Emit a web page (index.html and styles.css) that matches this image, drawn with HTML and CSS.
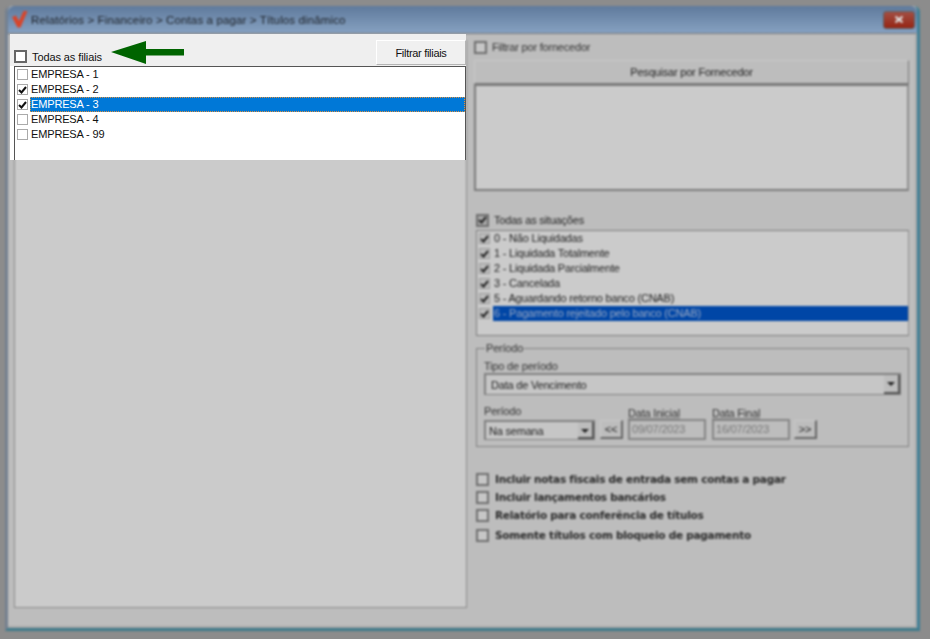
FILE: index.html
```html
<!DOCTYPE html>
<html lang="pt-BR">
<head>
  <meta charset="UTF-8">
  <title>Títulos dinâmico</title>
  <link rel="stylesheet" href="styles.css">
</head>
<body>
  <div class="stage">
    <div class="window">
      <div class="titlebar">
        <svg class="logo" width="16" height="17" viewBox="0 0 16 17"><path d="M0 6 L4 4.5 L7 10 L11.5 0 L15.5 0 L8.5 16.5 L5.5 16.5 Z" fill="#d8452a"/></svg>
        <span class="title">Relatórios &gt; Financeiro &gt; Contas a pagar &gt; Títulos dinâmico</span>
        <div class="close">
          <svg width="8" height="7" viewBox="0 0 8 7"><path d="M0.5 0.5 L7.5 6.5 M7.5 0.5 L0.5 6.5" stroke="#e0e0e0" stroke-width="2"/></svg>
        </div>
      </div>

      <div class="content">
        <div class="left-col">
          <div class="left-box"></div>
        </div>

        <div class="right-col">
          <label class="check-row filter-row"><span class="box"></span>Filtrar por fornecedor</label>
          <div class="btn search-btn">Pesquisar por Fornecedor</div>
          <div class="sunken supplier-list"></div>

          <label class="check-row all-status"><span class="box checked"><svg width="9" height="8" viewBox="0 0 9 8"><path d="M1 4 L3.5 6.5 L8 1" fill="none" stroke="#222" stroke-width="2"/></svg></span>Todas as situações</label>
          <ul class="sunken status-list">
            <li><span class="tick"><svg width="9" height="8" viewBox="0 0 9 8"><path d="M1 4 L3.5 6.5 L8 1" fill="none" stroke="#222" stroke-width="2"/></svg></span><span class="txt">0 - Não Liquidadas</span></li>
            <li><span class="tick"><svg width="9" height="8" viewBox="0 0 9 8"><path d="M1 4 L3.5 6.5 L8 1" fill="none" stroke="#222" stroke-width="2"/></svg></span><span class="txt">1 - Liquidada Totalmente</span></li>
            <li><span class="tick"><svg width="9" height="8" viewBox="0 0 9 8"><path d="M1 4 L3.5 6.5 L8 1" fill="none" stroke="#222" stroke-width="2"/></svg></span><span class="txt">2 - Liquidada Parcialmente</span></li>
            <li><span class="tick"><svg width="9" height="8" viewBox="0 0 9 8"><path d="M1 4 L3.5 6.5 L8 1" fill="none" stroke="#222" stroke-width="2"/></svg></span><span class="txt">3 - Cancelada</span></li>
            <li><span class="tick"><svg width="9" height="8" viewBox="0 0 9 8"><path d="M1 4 L3.5 6.5 L8 1" fill="none" stroke="#222" stroke-width="2"/></svg></span><span class="txt">5 - Aguardando retorno banco (CNAB)</span></li>
            <li class="sel"><span class="tick"><svg width="9" height="8" viewBox="0 0 9 8"><path d="M1 4 L3.5 6.5 L8 1" fill="none" stroke="#222" stroke-width="2"/></svg></span><span class="txt">6 - Pagamento rejeitado pelo banco (CNAB)</span></li>
          </ul>

          <fieldset class="period">
            <legend>Período</legend>
            <div class="lbl">Tipo de período</div>
            <div class="combo combo-wide">Data de Vencimento<span class="arrow"></span></div>
            <div class="period-row">
              <div class="field">
                <div class="lbl">Período</div>
                <div class="combo combo-small">Na semana<span class="arrow"></span></div>
              </div>
              <div class="btn nav-btn nav-prev">&lt;&lt;</div>
              <div class="field date">
                <div class="lbl">Data Inicial</div>
                <div class="date-input">09/07/2023</div>
              </div>
              <div class="field date">
                <div class="lbl">Data Final</div>
                <div class="date-input">16/07/2023</div>
              </div>
              <div class="btn nav-btn nav-next">&gt;&gt;</div>
            </div>
          </fieldset>

          <div class="options">
            <label class="check-row"><span class="box"></span>Incluir notas fiscais de entrada sem contas a pagar</label>
            <label class="check-row"><span class="box"></span>Incluir lançamentos bancários</label>
            <label class="check-row"><span class="box"></span>Relatório para conferência de títulos</label>
            <label class="check-row last"><span class="box"></span>Somente títulos com bloqueio de pagamento</label>
          </div>
        </div>
      </div>
    </div>

    <!-- part of the screen left in focus, on top of the dimmed window -->
    <div class="spotlight">
      <div class="spot-head">
        <label class="all-branches"><span class="big-box"></span>Todas as filiais</label>
        <svg class="green-arrow" width="74" height="24" viewBox="0 0 74 24"><path d="M0 11 L35 0 L35 8 L73 8 L73 14.500 L35 14.500 L35 23 Z" fill="#006400"/></svg>
        <div class="filter-btn">Filtrar filiais</div>
      </div>
      <ul class="branches">
        <li><span class="cb"></span><span class="name">EMPRESA - 1</span></li>
        <li><span class="cb"><svg width="9" height="8" viewBox="0 0 9 8"><path d="M1 4 L3.5 6.5 L8 1" fill="none" stroke="#111" stroke-width="2"/></svg></span><span class="name">EMPRESA - 2</span></li>
        <li class="active"><span class="cb"><svg width="9" height="8" viewBox="0 0 9 8"><path d="M1 4 L3.5 6.5 L8 1" fill="none" stroke="#111" stroke-width="2"/></svg></span><span class="name">EMPRESA - 3</span></li>
        <li><span class="cb"></span><span class="name">EMPRESA - 4</span></li>
        <li><span class="cb"></span><span class="name">EMPRESA - 99</span></li>
      </ul>
    </div>
  </div>
</body>
</html>
```

FILE: styles.css
```css
* {
  box-sizing: border-box;
}

body {
  margin: 0;
  background-color: #8c8c8c;
  font-family: "Liberation Sans", Arial, sans-serif;
  font-size: 11px;
  color: #222;
  overflow: hidden;
}

.stage {
  position: relative;
  width: 930px;
  height: 639px;
  padding: 6px 10px 8px 5px;
}

/* window, dimmed and blurred */
.window {
  height: 625px;
  display: flex;
  flex-direction: column;
  background-color: #bdbdbd;
  border-radius: 6px 6px 0 0;
  border-right: 3px solid #3f7f96;
  border-bottom: 3px solid #3f7a8a;
  border-left: 3px solid #74808f;
  filter: blur(1px);
}

.titlebar {
  height: 27px;
  flex: none;
  display: flex;
  align-items: center;
  padding: 0 2px 0 4px;
  border-radius: 6px 6px 0 0;
  background: linear-gradient(#5f7a9c, #86a1c1);
}

.logo {
  margin-right: 3px;
}

.title {
  font-size: 11.5px;
  letter-spacing: 0.13px;
  color: #1c2026;
}

.close {
  margin-left: auto;
  width: 32px;
  height: 18px;
  display: flex;
  align-items: center;
  justify-content: center;
  border-radius: 3px;
  border: 1px solid #5e5e62;
  background: linear-gradient(#a24f44, #962513);
}

.content {
  flex: 1;
  display: flex;
  border-top: 1px solid #777;
  border-right: 2px solid #aaa;
  border-bottom: 2px solid #a8a8a8;
}

.left-col {
  width: 459px;
  flex: none;
  padding: 6px 0 18px 6px;
}

.left-box {
  height: 100%;
  background-color: #cbcbcb;
  border-right: 1px solid #8a8a8a;
  border-bottom: 1px solid #8a8a8a;
  border-left: 1px solid #8a8a8a;
}

.right-col {
  flex: 1;
  padding: 6px 5px 0 7px;
  letter-spacing: -0.2px;
}

.check-row {
  display: flex;
  align-items: center;
  height: 14px;
}

.box {
  width: 13px;
  height: 13px;
  margin-right: 5px;
  flex: none;
  display: flex;
  align-items: center;
  justify-content: center;
  background-color: #c6c6c6;
  border: 2px solid #6e6e6e;
}

.box.checked {
  background-color: #a8a8a8;
}

.filter-row {
  color: #333;
}

.btn {
  display: flex;
  align-items: center;
  justify-content: center;
  background-color: #bdbdbd;
  border-top: 1px solid #c8c8c8;
  border-right: 1px solid #777;
  border-bottom: 1px solid #777;
  border-left: 1px solid #c8c8c8;
}

.search-btn {
  height: 24px;
  margin-top: 6px;
  margin-right: 1px;
}

.sunken {
  background-color: #cbcbcb;
  border: 2px solid #7b7b7b;
  border-right-color: #8f8f8f;
}

.supplier-list {
  height: 107px;
  margin-right: 1px;
}

.all-status {
  margin-top: 22px;
  margin-left: 2px;
}

.status-list {
  list-style: none;
  margin: 3px 1px 0 2px;
  padding: 0 0 1px 1px;
  height: 106px;
  border-width: 1px;
}

.status-list li {
  height: 15px;
  display: flex;
  align-items: center;
}

.tick {
  width: 11px;
  height: 11px;
  margin: 0 3px 0 1px;
  flex: none;
  display: flex;
  align-items: center;
  justify-content: center;
  background-color: #bcbcbc;
  border: 1px solid #9a9a9a;
}

.txt {
  flex: 1;
  padding-left: 1px;
  line-height: 15px;
}

.sel .txt {
  background-color: #0046a6;
  color: #9aa9c4;
}

.period {
  margin: 7px 1px 0 2px;
  padding: 7px 7px 0 7px;
  height: 104px;
  border: 1px solid #808080;
}

.period legend {
  padding: 0 1px;
  margin-left: 1px;
  line-height: 10px;
  color: #333;
}

.lbl {
  line-height: 12px;
  color: #333;
}

.combo {
  position: relative;
  display: flex;
  align-items: center;
  background-color: #c6c6c6;
  border: 1px solid #808080;
  border-top-width: 2px;
  border-left-width: 2px;
}

.combo-wide {
  height: 22px;
  margin-top: 1px;
  padding-left: 5px;
}

.combo-small {
  width: 111px;
  height: 20px;
  padding-left: 3px;
}

/* drop-down button at the right end of a combo */
.arrow {
  position: absolute;
  top: 0;
  right: 0;
  bottom: 0;
  width: 16px;
  background-color: #bdbdbd;
  border-right: 2px solid #555;
  border-bottom: 2px solid #555;
}

.arrow::after {
  content: "";
  position: absolute;
  left: 3px;
  top: 7px;
  border-top: 4px solid #222;
  border-left: 4px solid transparent;
  border-right: 4px solid transparent;
}

.period-row {
  display: flex;
  align-items: flex-end;
  margin-top: 10px;
}

.field .lbl {
  margin-bottom: 3px;
}

.nav-btn {
  width: 23px;
  height: 19px;
  margin-bottom: 1px;
  border-right: 2px solid #666;
  border-bottom: 2px solid #666;
}

.nav-prev {
  margin-left: 5px;
}

.nav-next {
  margin-left: 4px;
}

.date {
  width: 78px;
  margin-left: 6px;
}

.nav-prev + .date {
  margin-left: 5px;
}

.date .lbl {
  margin-bottom: 0;
  text-decoration: underline;
  text-decoration-color: #888;
}

.date-input {
  height: 21px;
  padding: 1px 2px;
  border: 2px solid #858585;
  background-color: #bdbdbd;
  color: #777;
  line-height: 14px;
}

.options {
  margin: 25px 0 0 2px;
  font-family: "DejaVu Sans", sans-serif;
  font-size: 10.5px;
  font-weight: bold;
  letter-spacing: -0.25px;
  color: #2a2a2a;
}

.options .box {
  margin-right: 6px;
}

.options .check-row {
  margin-bottom: 4px;
}

.options .check-row.last {
  margin-top: 6px;
}

/* sharp area */
.spotlight {
  position: absolute;
  left: 10px;
  top: 34px;
  width: 456px;
  height: 126px;
  background-color: #fff;
}

.spot-head {
  position: relative;
  height: 32px;
  display: flex;
  align-items: flex-start;
  background-color: #efefef;
}

.all-branches {
  display: flex;
  align-items: center;
  margin: 16px 0 0 4px;
  letter-spacing: -0.1px;
  color: #111;
}

.big-box {
  width: 13px;
  height: 13px;
  margin-right: 5px;
  background-color: #fff;
  border: 2px solid #666;
}

.green-arrow {
  position: absolute;
  left: 101px;
  top: 7px;
}

.filter-btn {
  width: 90px;
  height: 25px;
  margin: 6px 0 0 auto;
  display: flex;
  align-items: center;
  justify-content: center;
  letter-spacing: -0.3px;
  color: #111;
  background-color: #f0f0f0;
  border-top: 1px solid #fff;
  border-left: 1px solid #fff;
  border-right: 1px solid #b5b5b5;
  border-bottom: 1px solid #b5b5b5;
}

.branches {
  list-style: none;
  margin: 0 0 0 4px;
  padding: 0;
  height: 94px;
  background-color: #fff;
  border-top: 1px solid #555;
  border-left: 1px solid #555;
  border-right: 1px solid #555;
}

.branches li {
  height: 15px;
  display: flex;
  align-items: center;
  color: #111;
  letter-spacing: -0.15px;
}

.cb {
  width: 11px;
  height: 11px;
  margin: 0 2px 0 2px;
  flex: none;
  display: flex;
  align-items: center;
  justify-content: center;
  background-color: #fff;
  border: 1px solid #aaa;
}

.name {
  flex: 1;
  line-height: 13px;
  border: 1px solid transparent;
}

.active .name {
  background-color: #0078d7;
  color: #fff;
  border: 1px dotted #e0913e;
}
```
